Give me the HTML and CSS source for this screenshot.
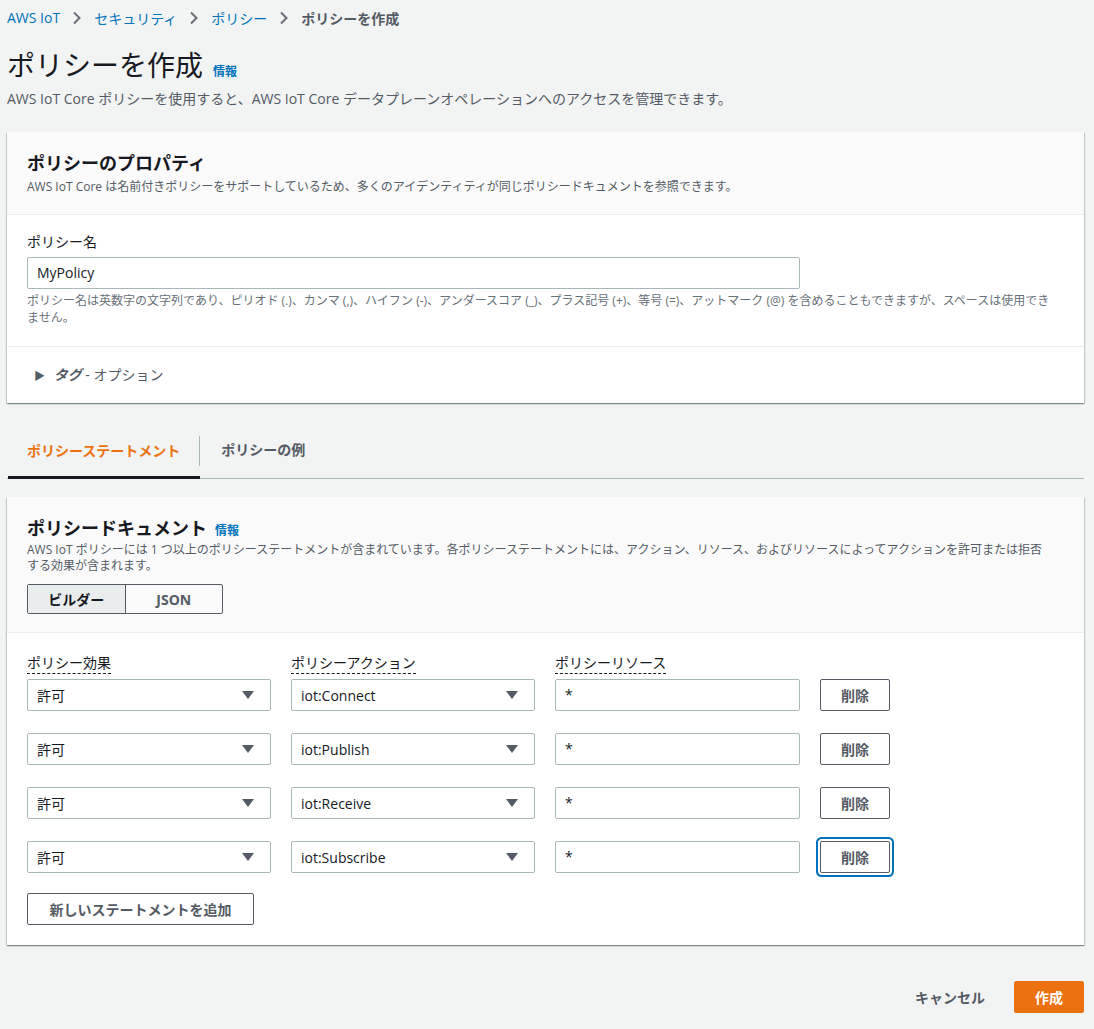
FILE: index.html
```html
<!DOCTYPE html>
<html lang="ja">
<head>
    <meta charset="UTF-8">
    <title>ポリシーを作成</title>
    <link rel="stylesheet" href="styles.css">
</head>
<body>
    <nav class="breadcrumb">
        <a href="#">AWS IoT</a>
        <svg class="chev" width="10" height="14" viewBox="0 0 10 14"><path d="M2 1.5 L7.5 7 L2 12.5" fill="none" stroke="#687078" stroke-width="2"/></svg>
        <a href="#">セキュリティ</a>
        <svg class="chev" width="10" height="14" viewBox="0 0 10 14"><path d="M2 1.5 L7.5 7 L2 12.5" fill="none" stroke="#687078" stroke-width="2"/></svg>
        <a href="#">ポリシー</a>
        <svg class="chev" width="10" height="14" viewBox="0 0 10 14"><path d="M2 1.5 L7.5 7 L2 12.5" fill="none" stroke="#687078" stroke-width="2"/></svg>
        <span class="current">ポリシーを作成</span>
    </nav>

    <div class="page-head">
        <h1>ポリシーを作成</h1>
        <a class="info" href="#">情報</a>
    </div>
    <p class="page-desc">AWS IoT Core ポリシーを使用すると、AWS IoT Core データプレーンオペレーションへのアクセスを管理できます。</p>

    <section class="card">
        <div class="card-head">
            <h2>ポリシーのプロパティ</h2>
            <p class="sub">AWS IoT Core は名前付きポリシーをサポートしているため、多くのアイデンティティが同じポリシードキュメントを参照できます。</p>
        </div>
        <div class="card-body">
            <label class="field-label">ポリシー名</label>
            <div class="text-input wide">MyPolicy</div>
            <p class="help">ポリシー名は英数字の文字列であり、ピリオド (.)、カンマ (,)、ハイフン (-)、アンダースコア (_)、プラス記号 (+)、等号 (=)、アットマーク (@) を含めることもできますが、スペースは使用できません。</p>
        </div>
        <div class="card-foot">
            <span class="caret">▶</span>
            <span class="tag-title">タグ</span>
            <span class="tag-opt">- オプション</span>
        </div>
    </section>

    <div class="tabs">
        <div class="tab active">ポリシーステートメント</div>
        <div class="tab">ポリシーの例</div>
    </div>

    <section class="card">
        <div class="card-head doc">
            <div class="title-row">
                <h2>ポリシードキュメント</h2>
                <a class="info" href="#">情報</a>
            </div>
            <p class="sub">AWS IoT ポリシーには 1 つ以上のポリシーステートメントが含まれています。各ポリシーステートメントには、アクション、リソース、およびリソースによってアクションを許可または拒否する効果が含まれます。</p>
            <div class="segment">
                <div class="seg selected">ビルダー</div>
                <div class="seg">JSON</div>
            </div>
        </div>
        <div class="card-body rows">
            <div class="grid labels">
                <div><span class="dotted">ポリシー効果</span></div>
                <div><span class="dotted">ポリシーアクション</span></div>
                <div><span class="dotted">ポリシーリソース</span></div>
                <div></div>
            </div>
            <div class="grid">
                <div class="select">許可<svg width="12" height="10" viewBox="0 0 12 10"><path d="M0 1 H12 L6 9 Z" fill="#545b64"/></svg></div>
                <div class="select">iot:Connect<svg width="12" height="10" viewBox="0 0 12 10"><path d="M0 1 H12 L6 9 Z" fill="#545b64"/></svg></div>
                <div class="text-input">*</div>
                <button class="btn">削除</button>
            </div>
            <div class="grid">
                <div class="select">許可<svg width="12" height="10" viewBox="0 0 12 10"><path d="M0 1 H12 L6 9 Z" fill="#545b64"/></svg></div>
                <div class="select">iot:Publish<svg width="12" height="10" viewBox="0 0 12 10"><path d="M0 1 H12 L6 9 Z" fill="#545b64"/></svg></div>
                <div class="text-input">*</div>
                <button class="btn">削除</button>
            </div>
            <div class="grid">
                <div class="select">許可<svg width="12" height="10" viewBox="0 0 12 10"><path d="M0 1 H12 L6 9 Z" fill="#545b64"/></svg></div>
                <div class="select">iot:Receive<svg width="12" height="10" viewBox="0 0 12 10"><path d="M0 1 H12 L6 9 Z" fill="#545b64"/></svg></div>
                <div class="text-input">*</div>
                <button class="btn">削除</button>
            </div>
            <div class="grid">
                <div class="select">許可<svg width="12" height="10" viewBox="0 0 12 10"><path d="M0 1 H12 L6 9 Z" fill="#545b64"/></svg></div>
                <div class="select">iot:Subscribe<svg width="12" height="10" viewBox="0 0 12 10"><path d="M0 1 H12 L6 9 Z" fill="#545b64"/></svg></div>
                <div class="text-input">*</div>
                <button class="btn focused">削除</button>
            </div>
            <button class="btn add">新しいステートメントを追加</button>
        </div>
    </section>

    <div class="actions">
        <button class="link-btn">キャンセル</button>
        <button class="primary">作成</button>
    </div>
</body>
</html>
```

FILE: styles.css
```css
body {
    margin: 0;
    padding: 0 10px 20px 7px;
    background-color: #f2f3f3;
    font-family: "Open Sans", "Noto Sans CJK JP", sans-serif;
    font-size: 14px;
    color: #16191f;
}
a {
    color: #0073bb;
    text-decoration: none;
}
.breadcrumb {
    display: flex;
    align-items: center;
    height: 35px;
    gap: 12px;
    font-size: 14px;
}
.breadcrumb .chev {
    display: block;
}
.breadcrumb .current {
    color: #545b64;
    font-weight: bold;
}
.page-head {
    display: flex;
    align-items: baseline;
    gap: 10px;
    margin-top: 8px;
}
h1 {
    margin: 0;
    font-size: 28px;
    font-weight: normal;
    line-height: 44px;
}
.info {
    font-size: 12px;
    font-weight: bold;
}
.page-desc {
    margin: 1px 0 22px;
    line-height: 22px;
    color: #545b64;
}
.card {
    background: #fff;
    box-shadow: 0 1px 1px 0 rgba(0, 28, 36, 0.3), 1px 1px 1px 0 rgba(0, 28, 36, 0.15), -1px 1px 1px 0 rgba(0, 28, 36, 0.15);
}
.card-head {
    background: #fafafa;
    border-bottom: 1px solid #eaeded;
    padding: 19px 20px 19px;
}
.card-head h2 {
    margin: 0 0 4px;
    font-size: 18px;
    line-height: 24px;
    font-weight: bold;
}
.sub {
    margin: 0;
    font-size: 12px;
    line-height: 16px;
    color: #545b64;
}
.card-body {
    padding: 16px 20px 20px;
}
.field-label {
    display: block;
    line-height: 22px;
    margin-bottom: 4px;
}
.text-input {
    box-sizing: border-box;
    height: 32px;
    border: 1px solid #aab7b8;
    border-radius: 2px;
    padding: 0 9px;
    line-height: 30px;
    color: #16191f;
    background: #fff;
}
.text-input.wide {
    width: 773px;
}
.help {
    margin: 3px 0 0;
    padding-right: 12px;
    font-size: 12px;
    line-height: 17px;
    color: #687078;
}
.card-foot {
    border-top: 1px solid #eaeded;
    padding: 17px 20px 16px 27px;
    line-height: 22px;
}
.caret {
    font-size: 11px;
    color: #545b64;
    margin-right: 5px;
}
.tag-title {
    font-weight: bold;
    font-style: italic;
    color: #545b64;
}
.tag-opt {
    color: #545b64;
}
.tabs {
    display: flex;
    margin: 20px 0 18px;
    border-bottom: 1px solid #aab7b8;
    height: 55px;
    padding-left: 1px;
}
.tab {
    display: flex;
    align-items: center;
    padding: 0 20px 0 19px;
    font-weight: bold;
    color: #545b64;
    position: relative;
}
.tab.active {
    color: #ec7211;
    border-bottom: 3px solid #16191f;
    margin-bottom: -1px;
}
.tab.active::after {
    content: "";
    position: absolute;
    right: 0;
    top: 13px;
    height: 30px;
    border-right: 1px solid #aab7b8;
}
.tab:not(.active) {
    padding-left: 21px;
    padding-bottom: 3px;
}
.card-head.doc {
    padding: 19px 20px 18px;
}
.card-head.doc h2 {
    margin: 0;
}
.title-row {
    display: flex;
    align-items: baseline;
    gap: 8px;
    margin-bottom: 2px;
}
.doc .sub {
    padding-right: 14px;
}
.segment {
    display: flex;
    margin-top: 10px;
    width: 196px;
    border: 1px solid #545b64;
    border-radius: 2px;
    height: 30px;
    box-sizing: border-box;
}
.seg {
    flex: 1;
    display: flex;
    align-items: center;
    justify-content: center;
    font-weight: bold;
    color: #545b64;
}
.seg.selected {
    background: #eaeded;
    color: #16191f;
    border-right: 1px solid #545b64;
}
.rows {
    padding-top: 20px;
}
.grid {
    display: grid;
    grid-template-columns: 244px 244px 245px 70px;
    column-gap: 20px;
    margin-bottom: 22px;
}
.grid.labels {
    margin-bottom: 5px;
}
.dotted {
    display: inline-block;
    line-height: 20px;
    border-bottom: 1px dashed #16191f;
}
.select {
    box-sizing: border-box;
    height: 32px;
    border: 1px solid #aab7b8;
    border-radius: 2px;
    padding: 0 16px 0 9px;
    display: flex;
    align-items: center;
    justify-content: space-between;
    background: #fff;
}
.btn {
    box-sizing: border-box;
    height: 32px;
    padding: 0 19px;
    background: #fff;
    border: 1px solid #545b64;
    border-radius: 2px;
    font-family: inherit;
    font-size: 14px;
    font-weight: bold;
    color: #545b64;
}
.grid .btn {
    width: 70px;
    padding: 0;
}
.btn.focused {
    box-shadow: 0 0 0 2px #fff, 0 0 0 4px #0073bb;
}
.btn.add {
    width: 227px;
    margin-top: -2px;
}
.actions {
    display: flex;
    justify-content: flex-end;
    align-items: center;
    gap: 12px;
    margin-top: 36px;
}
.link-btn {
    background: none;
    border: none;
    font-family: inherit;
    font-size: 14px;
    font-weight: bold;
    color: #545b64;
    padding: 0 17px;
    height: 32px;
}
.primary {
    height: 32px;
    width: 70px;
    background: #ec7211;
    border: 1px solid #ec7211;
    border-radius: 2px;
    color: #fff;
    font-family: inherit;
    font-size: 14px;
    font-weight: bold;
}
```
